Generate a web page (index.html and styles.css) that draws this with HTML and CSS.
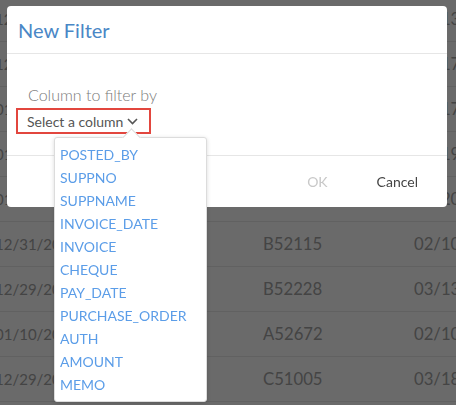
FILE: index.html
```html
<!DOCTYPE html>
<html>
<head>
<meta charset="utf-8">
<link rel="stylesheet" href="styles.css">
</head>
<body>
<div class="table">
  <div class="row"><span class="c1">12/31/2014</span><span class="c2">B51877</span><span class="c3">02/13/2015</span></div>
  <div class="row"><span class="c1">12/31/2014</span><span class="c2">B51902</span><span class="c3">02/17/2015</span></div>
  <div class="row"><span class="c1">01/05/2015</span><span class="c2">A52013</span><span class="c3">03/17/2015</span></div>
  <div class="row"><span class="c1">01/07/2015</span><span class="c2">A52044</span><span class="c3">02/19/2015</span></div>
  <div class="row"><span class="c1">01/09/2015</span><span class="c2">B52101</span><span class="c3">02/20/2015</span></div>
  <div class="row"><span class="c1">12/31/2014</span><span class="c2">B52115</span><span class="c3">02/10/2015</span></div>
  <div class="row"><span class="c1">12/29/2014</span><span class="c2">B52228</span><span class="c3">03/13/2015</span></div>
  <div class="row"><span class="c1">01/10/2015</span><span class="c2">A52672</span><span class="c3">02/10/2015</span></div>
  <div class="row"><span class="c1">12/29/2014</span><span class="c2">C51005</span><span class="c3">03/18/2015</span></div>
</div>
<div class="backdrop"></div>
<div class="dialog">
  <div class="dialog-header">New Filter</div>
  <div class="dialog-body">
    <div class="field-label">Column to filter by</div>
    <div class="select-box">
      <span class="select-text">Select a column</span>
      <svg class="chevron" width="11" height="7" viewBox="0 0 11 7"><path d="M1 1 L5.5 5.5 L10 1" fill="none" stroke="#555" stroke-width="1.6"/></svg>
    </div>
  </div>
  <div class="dialog-footer">
    <span class="btn btn-disabled">OK</span>
    <span class="btn">Cancel</span>
  </div>
</div>
<div class="menu">
  <div class="menu-arrow"></div>
  <div class="menu-item">POSTED_BY</div>
  <div class="menu-item">SUPPNO</div>
  <div class="menu-item">SUPPNAME</div>
  <div class="menu-item">INVOICE_DATE</div>
  <div class="menu-item">INVOICE</div>
  <div class="menu-item">CHEQUE</div>
  <div class="menu-item">PAY_DATE</div>
  <div class="menu-item">PURCHASE_ORDER</div>
  <div class="menu-item">AUTH</div>
  <div class="menu-item">AMOUNT</div>
  <div class="menu-item">MEMO</div>
</div>
</body>
</html>
```
FILE: styles.css
```css
html, body {
  margin: 0;
  padding: 0;
  width: 456px;
  height: 405px;
  overflow: hidden;
  background: #fff;
  font-family: Lato, "Open Sans", sans-serif;
}
.table {
  margin-top: -3px;
}
.row {
  display: flex;
  height: 44px;
  border-bottom: 1px solid #eaeaea;
  align-items: center;
  font-size: 16.7px;
  color: #a4a4a4;
  white-space: nowrap;
}
.c1 {
  flex: 0 0 268px;
  margin-left: -5px;
  font-size: 15px;
}
.c2 {
  flex: 0 0 151px;
}
.c3 {
  flex: 0 0 90px;
}
.backdrop {
  position: fixed;
  inset: 0;
  background: rgba(0, 0, 0, 0.585);
}
.dialog {
  position: absolute;
  left: 7px;
  top: 6px;
  width: 440px;
  height: 201px;
  background: #fff;
  border-radius: 4px;
  display: flex;
  flex-direction: column;
}
.dialog-header {
  height: 47px;
  border-bottom: 1px solid #e6e6e6;
  padding-left: 11px;
  display: flex;
  align-items: center;
  font-size: 20px;
  color: #4a87c6;
  box-sizing: content-box;
}
.dialog-body {
  height: 101px;
  border-bottom: 1px solid #e6e6e6;
  padding-left: 9px;
}
.field-label {
  margin-top: 31px;
  padding-left: 12px;
  font-size: 16px;
  font-weight: 300;
  color: #7a7a7a;
  line-height: 19px;
}
.select-box {
  display: flex;
  align-items: center;
  border: 2px solid #e2463e;
  width: 122px;
  height: 22px;
  margin-top: 4px;
  padding-left: 9px;
  box-sizing: content-box;
}
.select-text {
  font-size: 14px;
  color: #555;
  padding-top: 1px;
}
.chevron {
  margin-left: 4px;
  margin-top: 1px;
}
.dialog-footer {
  flex: 1;
  display: flex;
  align-items: center;
  justify-content: flex-end;
  padding-right: 29px;
  gap: 49px;
}
.btn {
  font-size: 14px;
  color: #444;
}
.btn-disabled {
  color: #c8c8c8;
}
.menu {
  position: absolute;
  left: 54px;
  top: 137px;
  width: 151px;
  height: 253px;
  padding: 5px 0;
  background: #fff;
  border: 1px solid #dcdcdc;
  border-radius: 3px;
  box-shadow: 0 1px 4px rgba(0, 0, 0, 0.15);
}
.menu-arrow {
  position: absolute;
  left: 70px;
  top: -7px;
  width: 12px;
  height: 12px;
  background: #fff;
  border-left: 1px solid #dcdcdc;
  border-top: 1px solid #dcdcdc;
  transform: rotate(45deg);
}
.menu-item {
  height: 23px;
  line-height: 23px;
  padding-left: 5px;
  font-size: 14px;
  color: #5b9de8;
  position: relative;
}
```
